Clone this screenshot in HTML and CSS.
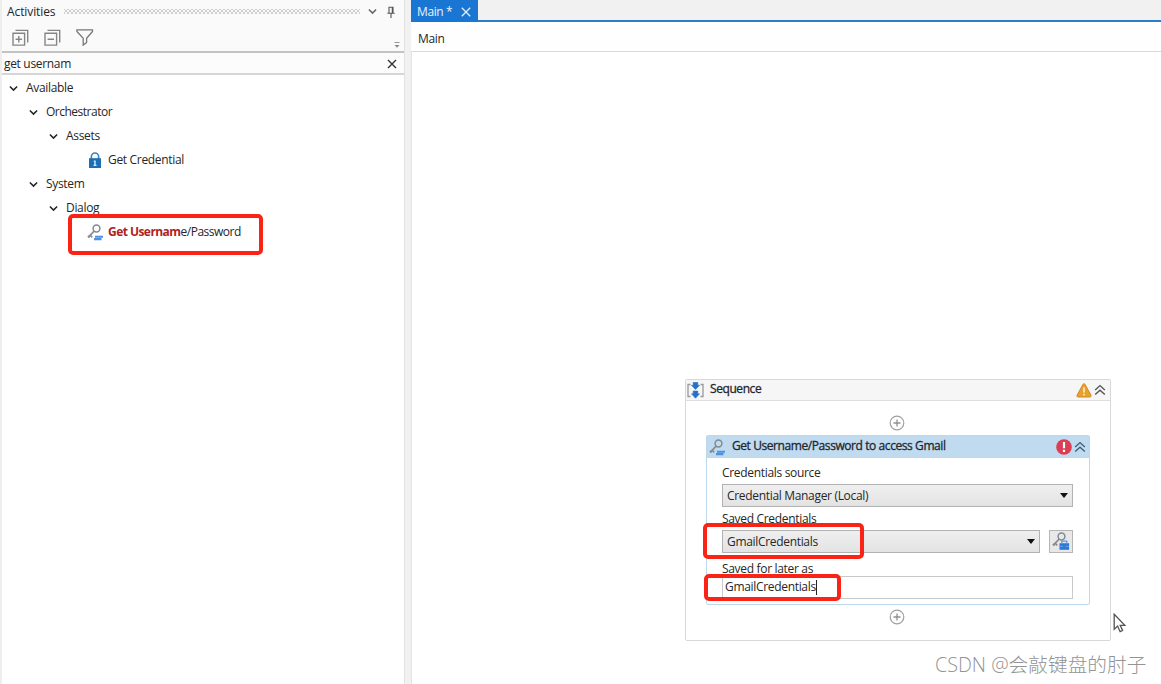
FILE: index.html
```html
<!doctype html>
<html lang="en">
  <head>
    <meta charset="UTF-8">
    <meta name="viewport" content="width=device-width, initial-scale=1.0">

    <title>Main - Activities</title>

    <link rel="stylesheet" href="styles.css">
  </head>
  <body>
    <!-- shared icons -->
    <svg class="defs" width="0" height="0">
      <symbol id="chevron" viewBox="0 0 8 6"><path d="M.8 1.2 4 4.4 7.2 1.2" fill="none" stroke="currentColor" stroke-width="1.4"/></symbol>
      <symbol id="collapse" viewBox="0 0 12 12"><path d="M1.2 6 6 1.6 10.8 6M1.2 10.6 6 6.2l4.8 4.4" fill="none" stroke="currentColor" stroke-width="1.4"/></symbol>
      <symbol id="key" viewBox="0 0 16 17">
        <circle cx="9.5" cy="4.5" r="3.4" fill="none" stroke="#858990" stroke-width="1.5"/>
        <path d="M7.2 7 1.6 12.8M3.2 11.2l2 2.2M1 11.8l1.4 2" fill="none" stroke="#858990" stroke-width="1.7"/>
      </symbol>
      <symbol id="lines" viewBox="0 0 16 17"><path d="M8 12.8h8M7 15.1h7.5" stroke="#4d91e2" stroke-width="2.1"/></symbol>
      <symbol id="plus" viewBox="0 0 16 16"><circle cx="8" cy="8" r="6.8" fill="#fff" stroke="#a0a0a0" stroke-width="1.2"/><path d="M8 4.5v7M4.5 8h7" stroke="#909090" stroke-width="1.3"/></symbol>
    </svg>

    <div class="app">
      <aside class="activities">
        <header class="panel-head">
          <div class="panel-title">
            <span class="title">Activities</span>
            <span class="grip"></span>
            <svg class="menu-arrow" width="9" height="7"><use href="#chevron"/></svg>
            <svg class="pin" width="8" height="12" viewBox="0 0 8 12"><path d="M2 7V1.2h4V7M.3 7.2h7.4M4 7.5V12M5.3 1.2V7" fill="none" stroke="#555" stroke-width="1.1"/></svg>
          </div>
          <div class="toolbar">
            <svg width="17" height="17" viewBox="0 0 17 17" fill="none" stroke="#858585" stroke-width="1.4"><path d="M1 4.2h11.6v11.9H1zM3.5 1.4h12.2v12M6.8 7v6.4M3.6 10.2H10"/></svg>
            <svg width="17" height="17" viewBox="0 0 17 17" fill="none" stroke="#858585" stroke-width="1.4"><path d="M1 4.2h11.6v11.9H1zM3.5 1.4h12.2v12M3.6 10.2H10"/></svg>
            <svg width="18" height="17" viewBox="0 0 18 17" fill="none" stroke="#777" stroke-width="1.3"><path d="M.9.9h15.6v1.6L10.6 9.2v4.2l-3.4 2.7V9.2L.9 2.5z"/></svg>
            <svg class="overflow" width="6" height="6" viewBox="0 0 6 6"><path d="M.5.5h5" stroke="#999"/><path d="M.5 3h5L3 5.8z" fill="#888"/></svg>
          </div>
        </header>

        <div class="search">
          <span>get usernam</span>
          <svg width="10" height="10" viewBox="0 0 10 10"><path d="m1 1 8 8M9 1 1 9" stroke="#333" stroke-width="1.4"/></svg>
        </div>

        <ul class="tree">
          <li class="lvl-1"><svg width="9" height="7"><use href="#chevron"/></svg><span>Available</span></li>
          <li class="lvl-2"><svg width="9" height="7"><use href="#chevron"/></svg><span class="tight">Orchestrator</span></li>
          <li class="lvl-3"><svg width="9" height="7"><use href="#chevron"/></svg><span>Assets</span></li>
          <li class="leaf">
            <svg width="16" height="17" viewBox="0 0 16 17"><path d="M4.4 8V4.6a3.6 3.6 0 0 1 7.2 0V8" fill="none" stroke="#3c82bd" stroke-width="1.6"/><path d="M2 6.2h12V16H2z" fill="#1b70b5"/><path d="M8 8.4v5.4M6.8 9.3H8.4M6.5 13.4h3" stroke="#d8e9f7" stroke-width="1.4"/></svg>
            <span>Get Credential</span>
          </li>
          <li class="lvl-2"><svg width="9" height="7"><use href="#chevron"/></svg><span>System</span></li>
          <li class="lvl-3"><svg width="9" height="7"><use href="#chevron"/></svg><span>Dialog</span></li>
          <li class="leaf">
            <svg width="16" height="17"><use href="#key"/><use href="#lines"/></svg>
            <span class="tight"><b>Get Usernam</b>e/Password</span>
            <i class="mark mark-activity"></i>
          </li>
        </ul>
      </aside>

      <main class="designer">
        <div class="tabs">
          <div class="tab">
            <span>Main *</span>
            <svg width="10" height="10" viewBox="0 0 10 10"><path d="m.8.8 8.4 8.4M9.2.8.8 9.2" stroke="#e4effb" stroke-width="1.3"/></svg>
          </div>
        </div>
        <div class="breadcrumb">Main</div>

        <div class="canvas">
          <section class="sequence">
            <header class="seq-head">
              <svg width="17" height="17" viewBox="0 0 17 17"><path d="M3.5 2.5H1v12h2.5M13.5 2.5H16v12h-2.5" fill="none" stroke="#999" stroke-width="1.3"/><path d="M6.2.5h4.6v2.8h1.7L8.5 7.4 4.5 3.3h1.7zM6.2 9.1h4.6v2.7h1.7l-4 4.4-4-4.4h1.7z" fill="#2372c8" stroke="#2372c8" stroke-width=".6"/></svg>
              <span class="head-text seq-name">Sequence</span>
              <svg class="warn" width="16" height="15" viewBox="0 0 16 15"><path d="M7 1.3c.4-.9 1.6-.9 2 0l6 11c.4.8-.1 1.7-1 1.7H2c-.9 0-1.4-.9-1-1.7z" fill="#e9a02c" stroke="#cf8a26"/><path d="M8 4.3v5.2M8 10.8v1.8" stroke="#fff3d2" stroke-width="1.5"/></svg>
              <svg class="fold" width="12" height="12"><use href="#collapse"/></svg>
            </header>

            <div class="seq-body">
              <svg width="16" height="16"><use href="#plus"/></svg>

              <article class="activity">
                <header class="act-head">
                  <svg width="16" height="17"><use href="#key"/><use href="#lines"/></svg>
                  <span class="head-text">Get Username/Password to access Gmail</span>
                  <svg class="error" width="16" height="16" viewBox="0 0 16 16"><circle cx="8" cy="8" r="7.8" fill="#db3d52"/><path d="M8 3v6.2M8 10.8v2.3" stroke="#fff" stroke-width="2.2"/></svg>
                  <svg class="fold" width="12" height="12"><use href="#collapse"/></svg>
                </header>

                <div class="fields">
                  <label class="label-source">Credentials source</label>
                  <div class="select">
                    <span>Credential Manager (Local)</span>
                    <i class="arrow"></i>
                  </div>

                  <label class="label-saved">Saved Credentials</label>
                  <div class="row">
                    <div class="select">
                      <span>GmailCredentials</span>
                      <i class="arrow"></i>
                    </div>
                    <button class="key-btn">
                      <svg width="18" height="19" viewBox="0 0 18 19"><use href="#key" width="16" height="17"/><path d="M7.5 11.2h9.6v6.6H7.5z" fill="#2e78d6"/><path d="M9.8 11.5V9.2h5v2.3M7.5 14.3h3.6M13.4 14.3H17" fill="none" stroke="#5a9be6" stroke-width="1.3"/></svg>
                    </button>
                    <i class="mark mark-saved"></i>
                  </div>

                  <label class="label-later">Saved for later as</label>
                  <div class="input">
                    <span>GmailCredentials</span><i class="caret"></i>
                    <i class="mark mark-later"></i>
                  </div>
                </div>
              </article>

              <svg width="16" height="16"><use href="#plus"/></svg>
            </div>
          </section>

          <svg class="cursor" width="14" height="20" viewBox="0 0 14 20"><path d="M1.2 1.2v15l3.4-3.1 2.5 5.6 2.5-1.2-2.4-5.2h4.6z" fill="#fff" stroke="#555" stroke-width="1.3"/></svg>
          <div class="watermark">CSDN @会敲键盘的肘子</div>
        </div>
      </main>
    </div>
  </body>
</html>
```

FILE: styles.css
```css
* {
  box-sizing: border-box;
}

body {
  margin: 0;
  overflow: hidden;
  background: #fff;
  color: #262626;
  font: 12px/16px "Open Sans", "Noto Sans", sans-serif;
  letter-spacing: -0.32px;
  white-space: nowrap;
}

svg,
i {
  display: block;
  flex: none;
}

.defs {
  position: absolute;
}

.app {
  display: flex;
  height: 684px;
  background: #f1f1f1;
}

/* Activities panel */

.activities {
  width: 405px;
  margin-right: 6px;
  border-left: 2px solid #eee;
  border-right: 1px solid #e2e2e2;
  background: #fff;
}

.panel-head {
  height: 53px;
  background: #fafafa;
  border-bottom: 2px solid #c3c3c3;
}

.panel-title {
  display: flex;
  align-items: center;
  height: 23px;
  padding: 0 9px 0 5px;
}

.title {
  width: 57px;
  letter-spacing: -0.1px;
}

.grip {
  width: 296px;
  height: 5px;
  background:
    radial-gradient(circle, #ccc 0.7px, transparent 1px) 0 0 / 4px 4px,
    radial-gradient(circle, #ccc 0.7px, transparent 1px) 2px 2px / 4px 4px;
}

.menu-arrow {
  margin-left: 8px;
  color: #666;
}

.pin {
  margin-left: 10px;
}

.toolbar {
  display: flex;
  align-items: center;
  gap: 15px;
  height: 28px;
  padding: 0 4px 0 10px;
}

.overflow {
  align-self: flex-end;
  margin: 0 0 3px auto;
}

.search {
  display: flex;
  align-items: center;
  justify-content: space-between;
  height: 22px;
  padding: 2px 7px 0 2px;
  background: #fcfcfc;
  border-bottom: 2px solid #d6d6d6;
}

.tree {
  margin: 0;
  padding: 1px 0 0;
  list-style: none;
}

.tree li {
  display: flex;
  align-items: center;
  gap: 8px;
  height: 24px;
}

.tree .lvl-1 {
  padding-left: 7px;
}

.tree .lvl-2 {
  padding-left: 27px;
}

.tree .lvl-3 {
  padding-left: 47px;
}

.tree .leaf {
  position: relative;
  gap: 5px;
  padding-left: 85px;
}

.tree .tight {
  letter-spacing: -0.5px;
}

.tree b {
  color: #b0221e;
  letter-spacing: -0.55px;
}

/* red highlight frames */

.mark {
  position: absolute;
  z-index: 2;
  border: 4px solid #fb2216;
  border-radius: 5px;
}

.mark-activity {
  left: 66px;
  top: -6px;
  width: 195px;
  height: 41px;
}

.mark-saved {
  left: -19px;
  top: -7px;
  width: 161px;
  height: 36px;
}

.mark-later {
  left: -19px;
  top: -3px;
  width: 137px;
  height: 27px;
}

/* Designer */

.designer {
  display: flex;
  flex: 1;
  flex-direction: column;
}

.tabs {
  height: 22px;
  border-bottom: 2px solid #2b7cc9;
}

.tab {
  display: flex;
  align-items: center;
  justify-content: space-between;
  width: 67px;
  height: 22px;
  padding: 1px 7px 0 6px;
  background: #1976d2;
  color: #e9f3fd;
  letter-spacing: -0.4px;
}

.breadcrumb {
  height: 30px;
  padding: 9px 7px 0;
  background: #fefefe;
  border-bottom: 1px solid #dcdcdc;
}

.canvas {
  position: relative;
  flex: 1;
  padding: 327px 50px 0 274px;
  background: #fff;
  border-left: 1px solid #e4e4e4;
}

.sequence {
  width: 426px;
  height: 262px;
  margin-left: -1px;
  border: 1px solid #d8d8d8;
  border-radius: 2px;
}

.seq-head,
.act-head {
  display: flex;
  align-items: center;
}

.seq-head {
  height: 21px;
  padding: 0 4px 0 1px;
  background: #f6f6f6;
  border-bottom: 1px solid #dedede;
}

.head-text {
  padding-bottom: 2px;
  color: #23272c;
  -webkit-text-stroke: 0.3px;
  letter-spacing: -0.42px;
}

.seq-name {
  margin-left: 6px;
}

.warn,
.error {
  margin-left: auto;
}

.fold {
  margin-left: 2px;
  color: #555;
}

.seq-body {
  display: flex;
  flex-direction: column;
  align-items: center;
  gap: 4px;
  padding: 14px 2px 0 0;
}

.activity {
  width: 384px;
  height: 170px;
  margin-left: 2px;
  border: 1px solid #bdd8ec;
  border-radius: 2px;
}

.act-head {
  height: 22px;
  padding: 0 3px 0 2px;
  background: #c0dbef;
}

.act-head .head-text {
  margin-left: 7px;
}

.act-head .fold {
  color: #426079;
}

.fields {
  padding: 7px 16px 0 15px;
}

.fields label {
  display: block;
  height: 16px;
}

.fields .label-source {
  height: 19px;
}

.fields .label-saved {
  margin-top: 4px;
  height: 19px;
}

.fields .label-later {
  margin-top: 8px;
  height: 15px;
}

.select {
  display: flex;
  align-items: center;
  justify-content: space-between;
  height: 23px;
  padding: 0 4px 0 4px;
  background: linear-gradient(#efefef, #e3e3e3);
  border: 1px solid #b2b2b2;
}

.arrow {
  border: 4px solid transparent;
  border-top: 5px solid #111;
  border-bottom: 0;
}

.row {
  position: relative;
  display: flex;
  gap: 9px;
}

.row .select {
  flex: 1;
}

.key-btn {
  display: flex;
  justify-content: center;
  align-items: center;
  width: 24px;
  height: 23px;
  padding: 0;
  background: #e8e8e8;
  border: 1px solid #b5b5b5;
}

.input {
  position: relative;
  display: flex;
  align-items: center;
  height: 23px;
  padding: 0 2px 1px;
  border: 1px solid #c9c9c9;
}

.caret {
  width: 1px;
  height: 15px;
  background: #222;
}

.cursor {
  position: absolute;
  left: 701px;
  top: 561px;
}

.watermark {
  position: absolute;
  left: 523px;
  top: 599px;
  color: #949494;
  font: 300 19.7px/28px "Open Sans", "Noto Sans CJK SC", sans-serif;
  letter-spacing: 0;
}
```
